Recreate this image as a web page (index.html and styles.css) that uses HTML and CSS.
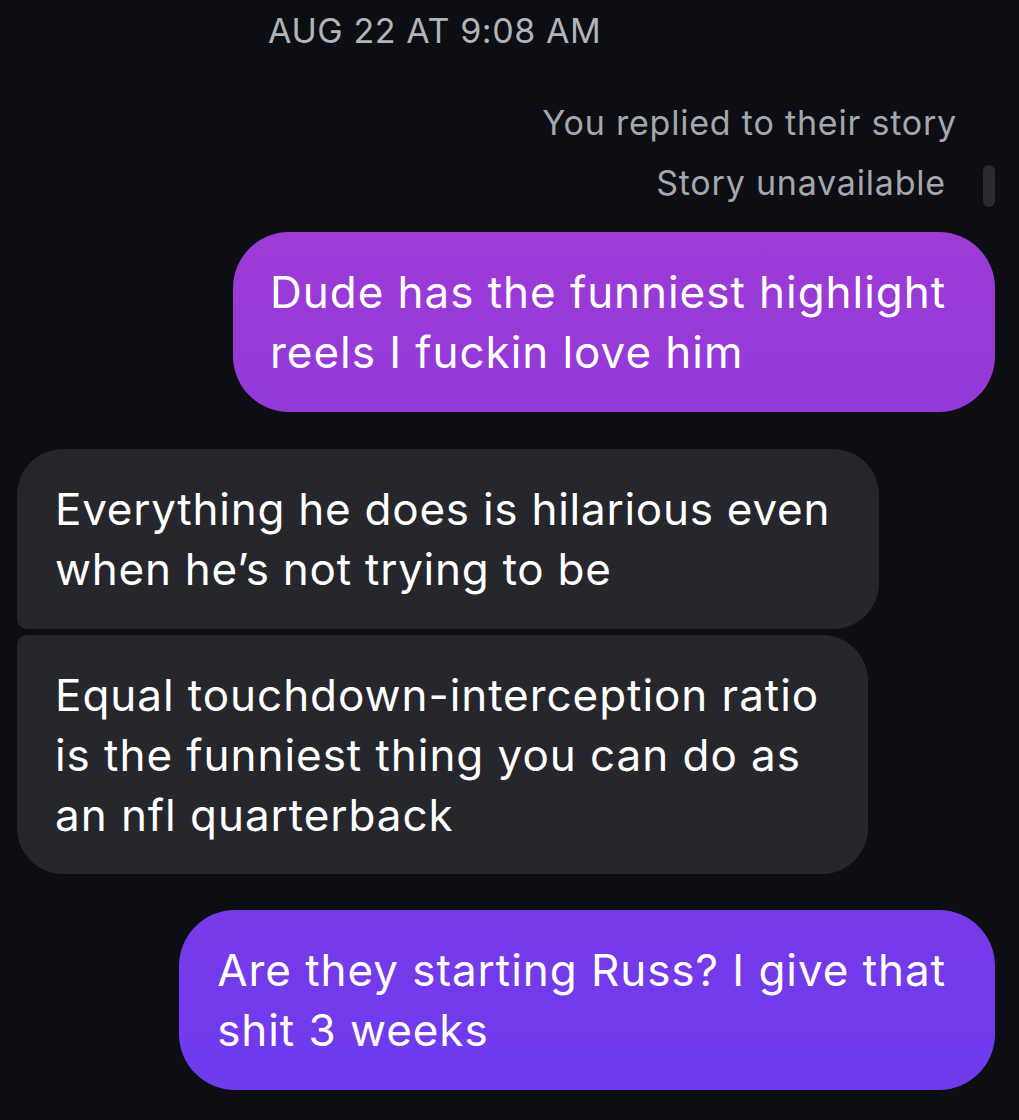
FILE: index.html
```html
<!DOCTYPE html>
<html lang="en">
<head>
<meta charset="utf-8">
<title>Chat</title>
<link rel="stylesheet" href="styles.css">
</head>
<body>
<main class="thread">
  <div class="timestamp">AUG 22 AT 9:08 AM</div>
  <div class="reply-note">
    <div class="reply-label">You replied to their story</div>
    <div class="story-row">
      <span class="story-text">Story unavailable</span>
      <span class="story-bar"></span>
    </div>
  </div>
  <div class="msg out out-1">Dude has the funniest highlight<br>reels I fuckin love him</div>
  <div class="group in-group">
    <div class="msg in first">Everything he does is hilarious even<br>when he’s not trying to be</div>
    <div class="msg in last">Equal touchdown-interception ratio<br>is the funniest thing you can do as<br>an nfl quarterback</div>
  </div>
  <div class="msg out out-2">Are they starting Russ? I give that<br>shit 3 weeks</div>
</main>
</body>
</html>
```
FILE: styles.css
```css
html, body {
  margin: 0;
  padding: 0;
  background: #0c0e13;
}
body {
  width: 1019px;
  height: 1120px;
  overflow: hidden;
  font-family: Inter, "Noto Sans", "Liberation Sans", sans-serif;
  -webkit-font-smoothing: antialiased;
}
.thread {
  display: flex;
  flex-direction: column;
  padding: 11px 24px 0 17px;
}
.timestamp {
  font-size: 34px;
  line-height: 40px;
  letter-spacing: 0.6px;
  color: #b1b4bb;
  padding-left: 251px;
}
.reply-note {
  display: flex;
  flex-direction: column;
  align-items: flex-end;
  margin-top: 52px;
  color: #a4a7ae;
  font-size: 34px;
  line-height: 40px;
  letter-spacing: 0.8px;
}
.reply-label {
  margin-right: 38px;
}
.story-row {
  display: flex;
  align-items: center;
  gap: 37px;
  margin-top: 16px;
}
.story-bar {
  width: 12px;
  height: 42px;
  border-radius: 6px;
  background: #2a2c32;
  margin-top: 6px;
}
.msg {
  font-size: 44px;
  line-height: 60px;
  letter-spacing: 0.95px;
  color: #ffffff;
  padding: 30px 49px 30px 37px;
  white-space: nowrap;
  width: fit-content;
}
.out {
  align-self: flex-end;
  border-radius: 56px;
}
.out-1 {
  margin-top: 25px;
  background: linear-gradient(180deg, #9d3bd6 0%, #9239d9 100%);
}
.out-2 {
  margin-top: 36px;
  padding-left: 38px;
  background: linear-gradient(180deg, #773ae8 0%, #6e3bee 100%);
}
.in-group {
  display: flex;
  flex-direction: column;
  gap: 6px;
  margin-top: 37px;
}
.in {
  background: #25272c;
  padding-left: 38px;
}
.in.first {
  letter-spacing: 0.75px;
  border-radius: 46px 46px 46px 10px;
}
.in.last {
  padding-bottom: 29px;
  border-radius: 10px 46px 46px 46px;
}
```
